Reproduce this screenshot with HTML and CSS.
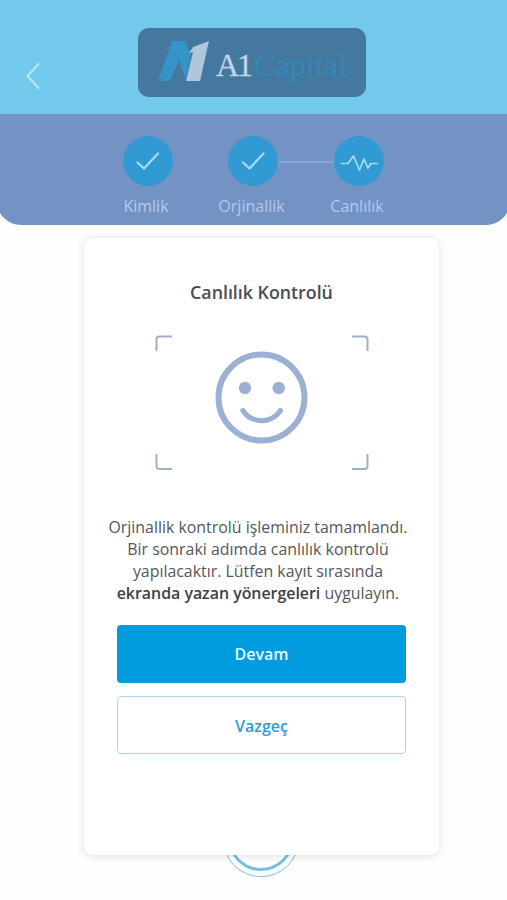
FILE: index.html
```html
<!DOCTYPE html>
<html lang="tr">
<head>
<meta charset="utf-8">
<title>Canlılık Kontrolü</title>
<link rel="stylesheet" href="styles.css">
</head>
<body>
<div class="screen">
  <header class="topbar">
    <svg class="back" viewBox="0 0 16 28"><path d="M13.500 2 2.500 14l11 12"/></svg>
    <div class="brand">
      <svg class="mark" viewBox="0 0 52 42"><path class="mark-a" d="M0 41 14 1h13l6 13-4 20-2 3-6-17-9 21z"/><path class="mark-one" d="m31 13 4-6 16-6-9 40H28l7-29z"/></svg>
      <span class="brand-a">A1</span><span class="brand-b">Capital</span>
    </div>
  </header>
  <section class="steps">
    <div class="step step-first">
      <div class="dot"><svg viewBox="0 0 50 50"><path d="m14.500 26.500 6.500 6 14-15"/></svg></div>
      <span>Kimlik</span>
    </div>
    <div class="link link-done"></div>
    <div class="step">
      <div class="dot"><svg viewBox="0 0 50 50"><path d="m15 26.500 6.500 6 14-15"/></svg></div>
      <span>Orjinallik</span>
    </div>
    <div class="link"></div>
    <div class="step">
      <div class="dot"><svg class="pulse" viewBox="0 0 50 50"><path d="M7.500 27.500H14l5.500-7.500 6 14 4.500-11 4 9 3-4.500h6"/></svg></div>
      <span>Canlılık</span>
    </div>
  </section>
  <main class="card">
    <h1>Canlılık Kontrolü</h1>
    <svg class="face" viewBox="0 0 214 136">
      <path class="frame" d="M1.500 16V4.500q0-3 3-3H17M197 1.500h12.500q3 0 3 3V16M1.500 119v12q0 3 3 3H17M197 134h12.500q3 0 3-3v-12"/>
      <circle class="ring" cx="106.500" cy="62.500" r="43"/>
      <circle class="eye" cx="90" cy="53" r="6.200"/><circle class="eye" cx="123.700" cy="53" r="6.200"/>
      <path class="smile" d="M87.800 75.500c9 13.500 28.500 13.500 37.700 0"/>
    </svg>
    <p>Orjinallik kontrolü işleminiz tamamlandı.<br>Bir sonraki adımda canlılık kontrolü<br>yapılacaktır. Lütfen kayıt sırasında<br><b>ekranda yazan yönergeleri</b> uygulayın.</p>
    <button class="btn primary">Devam</button>
    <button class="btn outline">Vazgeç</button>
  </main>
  <div class="shutter"><svg viewBox="0 0 82 82"><circle class="outer" cx="41" cy="43" r="37.700"/><circle class="inner" cx="41" cy="42" r="31.500"/></svg></div>
</div>
</body>
</html>
```

FILE: styles.css
```css
* { box-sizing: border-box; }
body { margin: 0; background: #fefefe; font-family: "Open Sans", "Noto Sans", sans-serif; }
.screen { width: 507px; height: 900px; overflow: hidden; display: flex; flex-direction: column; align-items: center; }
svg { display: block; fill: none; }
.topbar { width: 100%; height: 114px; flex: none; background: #73c9ec; display: flex; padding: 28px 0 0 25px; }
.back { width: 16px; height: 28px; margin: 34px 97px 0 0; stroke: #b9e8fb; stroke-width: 2; stroke-linecap: round; }
.brand { width: 228px; height: 69px; border-radius: 11px; background: #44789f; display: flex; align-items: center; padding-left: 20px; font-family: "Liberation Serif", serif; font-size: 32px; line-height: 40px; }
.mark { width: 52px; height: 42px; margin-top: -4px; flex: none; }
.mark-a { fill: #3693c5; }
.mark-one { fill: #b0c6df; }
.brand-a { margin: 5px 0 0 6px; width: 33px; color: #c0d5eb; letter-spacing: -2px; -webkit-text-stroke: .3px #c0d5eb; }
.brand-b { margin: 5px 0 0 5px; color: #3487b7; letter-spacing: .1px; -webkit-text-stroke: .3px #3487b7; }
.steps { width: 513px; height: 111px; flex: none; margin-left: -1px; border-radius: 0 0 24px 24px; background: #7293c3; display: flex; justify-content: center; padding: 22px 0 0; }
.step { width: 50px; display: flex; flex-direction: column; align-items: center; color: #b6c8ee; font-size: 16px; line-height: 22px; white-space: nowrap; }
.dot { width: 50px; height: 50px; border-radius: 50%; background: #329ad2; margin-bottom: 8.500px; }
.dot svg { stroke: #a5dcfb; stroke-width: 2.2; stroke-linecap: round; stroke-linejoin: round; }
.dot .pulse { stroke-width: 1.7; }
.step span { margin-left: -3px; }
.link { width: 55.500px; height: 2px; margin-top: 25px; background: #84a5d5; }
.link-done { background: #6e92c5; height: 1px; }
.card { width: 355px; height: 617px; flex: none; margin: 13px 0 0 16px; padding-top: 42px; border-radius: 9px; background: #fff; box-shadow: 0 1px 6px 2px rgba(0,0,0,.08); display: flex; flex-direction: column; align-items: center; position: relative; z-index: 1; }
h1 { margin: 0; font-size: 17.800px; line-height: 24px; font-weight: 600; color: #4b4c53; white-space: nowrap; }
.face { width: 214px; height: 136px; margin-top: 31px; }
.frame { stroke: #9eafcd; stroke-width: 2; }
.ring, .smile { stroke: #9bb0d3; stroke-width: 6; }
.smile { stroke-width: 5; stroke-linecap: round; }
.eye { fill: #9bb0d3; }
p { margin: 45px 0 0 -7px; text-align: center; font-size: 15.900px; line-height: 22px; color: #55565d; white-space: nowrap; }
b { font-weight: 600; color: #3e4047; }
.btn { width: 289px; height: 58px; flex: none; border-radius: 4px; font: 600 16px/22px "Open Sans", sans-serif; padding: 0; }
.primary { margin-top: 21px; border: 0; background: #009bdf; color: #e9fbff; }
.outline { margin-top: 13px; border: 1px solid #a5d7e8; background: #fff; color: #329bd1; padding-top: 1px; }
.shutter { width: 82px; height: 82px; flex: none; margin: -59px 0 0 15px; }
.outer { stroke: #82bfd9; stroke-width: 1; }
.inner { stroke: #74bedf; stroke-width: 3; }
```
